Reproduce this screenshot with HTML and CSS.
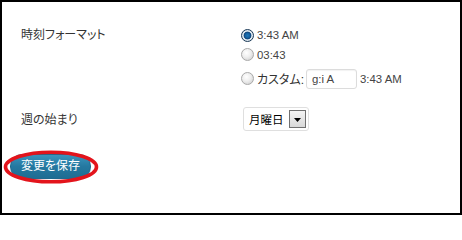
FILE: index.html
```html
<!DOCTYPE html>
<html lang="ja">
<head>
<meta charset="utf-8">
<link rel="stylesheet" href="styles.css">
</head>
<body>
<div class="frame">
  <div class="row row-time">
    <div class="label">時刻フォーマット</div>
    <div class="field">
      <div class="opt opt1"><span class="radio on"></span><span class="txt lat">3:43 AM</span></div>
      <div class="opt opt2"><span class="radio"></span><span class="txt lat">03:43</span></div>
      <div class="opt opt3"><span class="radio"></span><span class="txt">カスタム:</span><span class="input lat">g:i A</span><span class="txt lat sample">3:43 AM</span></div>
    </div>
  </div>
  <div class="row row-week">
    <div class="label">週の始まり</div>
    <div class="field">
      <div class="select"><span class="sel-text">月曜日</span><span class="sel-btn"><svg width="7" height="4" viewBox="0 0 7 4"><path d="M0 0H7L3.5 4Z" fill="#000"/></svg></span></div>
    </div>
  </div>
  <div class="submit">
    <button class="btn">変更を保存</button>
    <svg class="ring" width="96" height="34" viewBox="0 0 96 34"><ellipse cx="48" cy="17" rx="45.5" ry="14.8" fill="none" stroke="#e3141c" stroke-width="3.6"/></svg>
  </div>
</div>
</body>
</html>
```

FILE: styles.css
```css
html, body {
  margin: 0;
  padding: 0;
  background: #fff;
}
.frame {
  width: 462px;
  height: 215px;
  box-sizing: border-box;
  border: 2px solid #000;
  padding-top: 23px;
  font-family: "Liberation Sans", "Noto Sans CJK JP", sans-serif;
  font-size: 12px;
  color: #333;
  font-feature-settings: "palt" 1;
  position: relative;
}
.row {
  display: grid;
  grid-template-columns: 220px 1fr;
  padding-left: 19px;
}
.label {
  line-height: 20px;
  height: 20px;
}
.field {
  display: flex;
  flex-direction: column;
}
.opt {
  display: flex;
  align-items: center;
  height: 20px;
}
.opt2 {
  height: 19px;
}
.opt3 {
  margin-top: 3px;
  height: 23px;
}
.radio {
  width: 11px;
  height: 11px;
  border-radius: 50%;
  border: 1px solid #a9a9a9;
  background: radial-gradient(circle at 40% 35%, #fff 0%, #eee 45%, #c8c8c8 100%);
  margin-right: 3px;
  flex: none;
}
.radio.on {
  border-color: #1b3a57;
  background: radial-gradient(circle at 50% 50%, #1f79b8 0%, #1560a0 30%, #0f4478 45%, #e6eef4 55%, #b7c4cf 100%);
}
.txt {
  white-space: nowrap;
}
.lat {
  font-size: 11.4px;
  color: #444;
}
.input {
  width: 44px;
  height: 18px;
  border: 1px solid #dcdcdc;
  border-radius: 3px;
  margin-left: 2px;
  padding-left: 5px;
  line-height: 18px;
  box-shadow: inset 0 1px 1px #f2f2f2;
}
.sample {
  margin-left: 3px;
}
.row-week {
  margin-top: 17px;
  align-items: center;
}
.row-week .label {
  margin-top: 1px;
}
.select {
  margin-left: 2px;
  width: 66px;
  height: 24px;
  box-sizing: border-box;
  border: 1px solid #dfdfdf;
  border-radius: 3px;
  display: flex;
  align-items: center;
  justify-content: space-between;
  padding: 0 2px 0 5px;
}
.sel-text {
  color: #000;
  font-size: 11.5px;
}
.sel-btn {
  width: 17px;
  height: 18px;
  box-sizing: border-box;
  border: 1px solid #707070;
  background: linear-gradient(#f4f4f4, #d8d8d8);
  display: flex;
  align-items: center;
  justify-content: center;
  padding-top: 2px;
}
.submit {
  position: relative;
  margin-top: 23px;
  padding-left: 8px;
}
.btn {
  width: 81px;
  height: 25px;
  border: 1px solid #1f6a8e;
  border-radius: 12px;
  background: linear-gradient(#3a94bd, #2478a0 50%, #1f6d93);
  color: #fff;
  font-family: "Liberation Sans", "Noto Sans CJK JP", sans-serif;
  font-size: 12px;
  font-feature-settings: "palt" 1;
  padding: 0;
  line-height: 23px;
  display: block;
}
.ring {
  position: absolute;
  left: 1px;
  top: -4px;
}
```
